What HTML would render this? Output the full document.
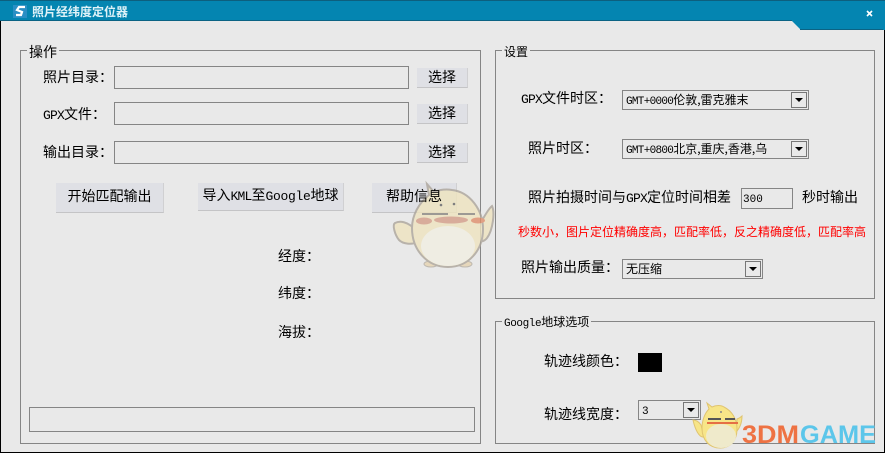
<!DOCTYPE html>
<html><head><meta charset="utf-8">
<style>
html,body{margin:0;padding:0;width:885px;height:453px;overflow:hidden;background:#e9e9e9}
body{position:relative;font-family:"Liberation Serif","WenQuanYi Zen Hei","Noto Serif CJK SC",serif;font-size:14px;color:#000}
.a{position:absolute;box-sizing:border-box}
.t{position:absolute;white-space:nowrap;line-height:16px;font-family:"WenQuanYi Zen Hei","Noto Sans CJK SC",sans-serif;font-size:14px}
.m{font-family:"Liberation Mono",monospace;font-size:13px;letter-spacing:-.8px}
.g{position:absolute;box-sizing:border-box;border:1px solid #858585}
.b{position:absolute;box-sizing:border-box;background:#dfe0e5;border-bottom:1px solid #c4c4c6;border-right:1px solid #d0d0d2;text-align:center;font-family:"WenQuanYi Zen Hei","Noto Sans CJK SC",sans-serif;font-size:14px;white-space:nowrap}
.s{position:absolute;box-sizing:border-box;border:1px solid #858585;background:#e9e9e9;font-family:"WenQuanYi Zen Hei","Noto Sans CJK SC",sans-serif;font-size:12px;line-height:17px;padding-left:3px;white-space:nowrap;overflow:hidden}
.d{position:absolute;right:1px;top:1px;width:16px;height:16px;box-sizing:border-box;border:1px solid #777;background:#e9e9e9}
.d:after{content:"";position:absolute;left:3px;top:5px;border-left:4px solid transparent;border-right:4px solid transparent;border-top:4px solid #000}
.l{background:#e9e9e9;padding:0 2px}
</style></head><body>
<div class="a" style="left:0;top:0;width:885px;height:453px;border-left:1px solid #000;border-right:1px solid #000;border-bottom:1px solid #000"></div>
<svg class="a" style="left:0;top:0" width="885" height="30"><polygon points="0,0 885,0 885,30 883,30 883,29 800,29 792,21 0,21" fill="#0485b1"/><rect width="885" height="1" fill="#0d5f7e"/><rect y="20" width="792" height="1" fill="#0b6384"/><rect x="800" y="29" width="83" height="1" fill="#0b6384"/>
<rect x="13" y="5" width="14" height="13" fill="#2a8fc4"/><path d="M25 7H19L17 10 22 12 21 15H16" stroke="#fff" stroke-width="2.2" fill="none"/>
<path d="M867 11l5 5m0-5l-5 5" stroke="#fff" stroke-width="1.6"/></svg>
<div class="t" style="left:32px;top:4px;color:#dff2f8;font-size:12px;font-weight:bold">照片经纬度定位器</div>

<div class="g" style="left:20px;top:50px;width:461px;height:394px"></div>
<div class="g" style="left:495px;top:50px;width:380px;height:249px"></div>
<div class="g" style="left:495px;top:321px;width:380px;height:123px"></div>
<div class="t l" style="left:27px;top:44px">操作</div>
<div class="t l" style="left:502px;top:44px;font-size:12px">设置</div>
<div class="t l" style="left:502px;top:314px;font-size:12px"><span class="m" style="font-size:11px;letter-spacing:-.4px">Google</span>地球选项</div>

<div class="t" style="left:43px;top:69px">照片目录：</div>
<div class="t" style="left:43px;top:106px"><span class="m">GPX</span>文件：</div>
<div class="t" style="left:43px;top:144px">输出目录：</div>
<div class="g" style="left:114px;top:66px;width:295px;height:23px"></div>
<div class="g" style="left:114px;top:102px;width:295px;height:23px"></div>
<div class="g" style="left:114px;top:141px;width:295px;height:23px"></div>
<div class="b" style="left:417px;top:68px;width:51px;height:20px;line-height:18px">选择</div>
<div class="b" style="left:417px;top:104px;width:51px;height:20px;line-height:18px">选择</div>
<div class="b" style="left:417px;top:143px;width:51px;height:20px;line-height:18px">选择</div>
<div class="b" style="left:56px;top:183px;width:108px;height:30px;line-height:26px">开始匹配输出</div>
<div class="b" style="left:198px;top:183px;width:146px;height:28px;line-height:25px">导入<span class="m">KML</span>至<span class="m" style="letter-spacing:-.3px">Google</span>地球</div>
<div class="b" style="left:372px;top:183px;width:85px;height:30px"></div>
<div class="t" style="left:278px;top:248px">经度：</div>
<div class="t" style="left:278px;top:285px">纬度：</div>
<div class="t" style="left:278px;top:324px">海拔：</div>
<div class="g" style="left:29px;top:407px;width:446px;height:25px"></div>

<div class="t" style="left:521px;top:90px"><span class="m">GPX</span>文件时区：</div>
<div class="s" style="left:622px;top:90px;width:187px;height:20px"><span class="m" style="font-size:11px;letter-spacing:-.7px">GMT+0000</span>伦敦,雷克雅末<div class="d"></div></div>
<div class="t" style="left:528px;top:140px">照片时区：</div>
<div class="s" style="left:622px;top:139px;width:187px;height:20px"><span class="m" style="font-size:11px;letter-spacing:-.7px">GMT+0800</span>北京,重庆,香港,乌<div class="d"></div></div>
<div class="t" style="left:528px;top:189px">照片拍摄时间与<span class="m">GPX</span>定位时间相差</div>
<div class="s" style="left:741px;top:188px;width:52px;height:21px;line-height:18px;padding-left:1px"><span class="m" style="letter-spacing:0;font-size:11px">300</span></div>
<div class="t" style="left:802px;top:189px">秒时输出</div>
<div class="t" style="left:518px;top:224px;font-size:12px;color:#f00">秒数小，图片定位精确度高，匹配率低，反之精确度低，匹配率高</div>
<div class="t" style="left:521px;top:259px">照片输出质量：</div>
<div class="s" style="left:622px;top:259px;width:141px;height:20px">无压缩<div class="d"></div></div>
<div class="t" style="left:544px;top:353px">轨迹线颜色：</div>
<div class="a" style="left:638px;top:353px;width:24px;height:19px;background:#000"></div>
<div class="t" style="left:544px;top:406px">轨迹线宽度：</div>
<div class="s" style="left:638px;top:400px;width:63px;height:20px"><span class="m" style="letter-spacing:0;font-size:11px">3</span><div class="d"></div></div>

<!-- large watermark -->
<svg class="a" style="left:385px;top:180px;opacity:.8" width="110" height="95" viewBox="0 0 110 95">
<ellipse cx="46" cy="84" rx="7" ry="3" fill="#e6d3b0" stroke="#b5aea3"/><ellipse cx="80" cy="84" rx="7" ry="3" fill="#e6d3b0" stroke="#b5aea3"/>
<path d="M33 52C22 40 14 41 10 43c-3 2 0 12 4 17 4 4 12 5 20 2z" fill="#efe4bf" stroke="#aca59b" stroke-width="2"/>
<path d="M95 44c3-5 8-15 12-18 3 6 1 24-5 32-2 3-6 4-8 3z" fill="#efe4bf" stroke="#aca59b" stroke-width="2"/>
<path d="M42 4l7 8c5-2 12-3 18-2 18 2 31 20 31 39 0 22-15 38-35 38C42 87 27 70 27 48c0-13 7-25 17-33z" fill="#efe4bf" stroke="#aca59b" stroke-width="2"/>
<ellipse cx="63" cy="66" rx="27" ry="20" fill="#f1eee2"/>
<rect x="37" y="33" width="26" height="2" fill="#8a867f"/><rect x="73" y="33" width="17" height="2" fill="#8a867f"/>
<ellipse cx="39" cy="41" rx="8" ry="3.5" fill="#d59d88"/><ellipse cx="93" cy="40.500" rx="7" ry="3" fill="#e08f6c"/>
<ellipse cx="66" cy="40" rx="17" ry="3.500" fill="#d59d88"/>
<circle cx="56" cy="25" r="1.300" fill="#666"/><circle cx="69" cy="24" r="1.300" fill="#666"/>
</svg>
<div class="t" style="left:386px;top:188px">帮助信息</div>
<!-- small watermark + logo -->
<svg class="a" style="left:695px;top:400px;overflow:visible" width="190" height="53" viewBox="0 0 190 53">
<text x="47" y="43" font-family="Liberation Sans,sans-serif" font-weight="bold" font-size="25" fill="#ee7243" textLength="57" lengthAdjust="spacingAndGlyphs">3DM</text>
<text x="105" y="43" font-family="Liberation Sans,sans-serif" font-weight="bold" font-size="25" fill="#5cc6ea" textLength="76" lengthAdjust="spacingAndGlyphs">GAME</text>
<path d="M-2 20c3 0 6 2 8 5l3 12c-5 1-9-8-11-17z" fill="#f7e588" stroke="#e0c470"/>
<path d="M42 19c3-1 4-2 5-3 0 6-2 12-6 16z" fill="#f7e588" stroke="#e0c470"/>
<path d="M12 3l5 4c4-2 9-2 12 0 8 4 13 12 13 22 0 12-7 19-17 19S7 41 7 28C7 20 10 13 14 9z" fill="#f7e588" stroke="#e0c470"/>
<ellipse cx="26" cy="36" rx="15" ry="12" fill="#efeacb"/>
<rect x="12" y="22" width="31" height="2" fill="#e56f45"/><rect x="13" y="18" width="13" height="2" fill="#555"/><rect x="30" y="18" width="10" height="2" fill="#555"/>
<circle cx="26" cy="12" r="1" fill="#888"/>
</svg>
</body></html>
